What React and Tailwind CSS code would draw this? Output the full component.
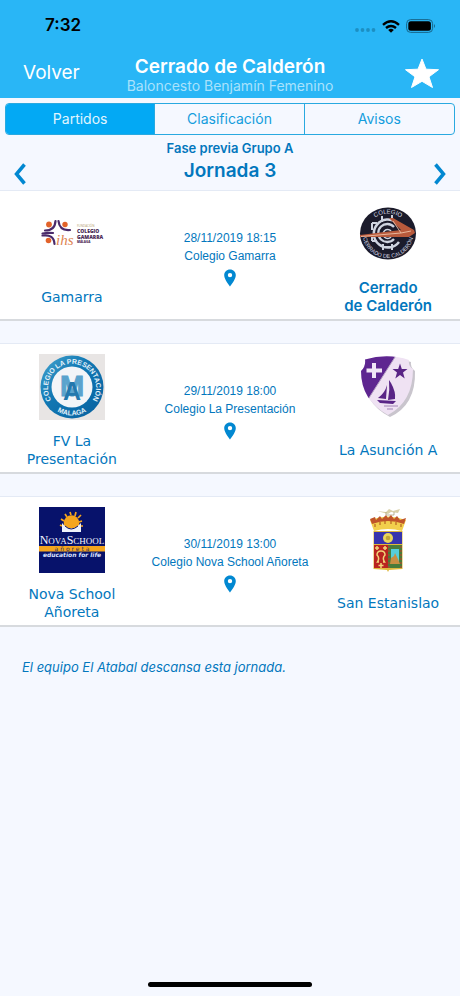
import { useState } from "react";

const TABS = ["Partidos", "Clasificación", "Avisos"];

/* ---------- team badges ---------- */
function GamarraBadge() {
  return (
    <svg viewBox="0 0 66 66" className="h-full w-full" aria-hidden="true">
      <g fill="none" stroke="#4a2a6b" strokeWidth="2.200" strokeLinecap="round">
        <path d="M6 29.500Q16 29.500 16.500 20" />
        <path d="M31 29Q20.500 30 19.500 20" />
        <path d="M3.500 32.500Q9 31.500 14 32" />
        <path d="M3.500 34.500Q15 33 15.500 43" />
      </g>
      <g fill="#e2632a">
        <circle cx="10" cy="23.500" r="2.900" />
        <circle cx="26" cy="23.500" r="2.700" />
        <circle cx="9.500" cy="39.500" r="2.800" />
      </g>
      <text x="17" y="43.500" fontSize="15" fontStyle="italic" fill="#dd8350" fontFamily="'Liberation Serif', serif">ihs</text>
      <text x="38" y="26" fontSize="3" fill="#b29a6a" fontFamily="'Open Sans', sans-serif">FUNDACIÓN</text>
      <g fill="#4a2a55" fontFamily="'Open Sans', sans-serif" fontWeight="800">
        <text x="38" y="32" fontSize="5">COLEGIO</text>
        <text x="38" y="37.500" fontSize="5">GAMARRA</text>
        <text x="38" y="42" fontSize="3">MÁLAGA</text>
      </g>
    </svg>
  );
}

function CerradoBadge() {
  return (
    <svg viewBox="0 0 66 66" className="h-full w-full" aria-hidden="true">
      <defs>
        <path id="cerrado-top" d="M12 32.500A21 20 0 0 1 54 32.500" />
        <path id="cerrado-bottom" d="M7.500 32A25.500 25 0 0 0 58.500 32" />
      </defs>
      <ellipse cx="33" cy="32.500" rx="28" ry="26" fill="#1b1b2b" />
      <g fill="none" stroke="#cfd4e0">
        <path d="M42 22A14 14 0 1 0 44 41" strokeWidth="2.500" />
        <path d="M39 26A9 9 0 1 0 39 38" strokeWidth="2.300" />
        <path d="M36 30A4.500 4.500 0 1 0 36 36" strokeWidth="1.500" />
        <path d="M27 15V21M37 14V19M17 22H22M17 40H22M28 43V49M28 46H37M37 43V49M17 22V29M17 35V40" strokeWidth="2" />
      </g>
      <path d="M5 34L46 29L34 17L38 17L59 29L60 32L54 36L5 36Z" fill="#b85a3c" />
      <path d="M6 35.500L46 32L38 20M46 32L56 30" fill="none" stroke="#edc0a5" strokeWidth="0.900" />
      <g fill="#dadde6" fontFamily="'Liberation Sans', sans-serif">
        <text fontSize="6" textAnchor="middle">
          <textPath href="#cerrado-top" startOffset="50%">COLEGIO</textPath>
        </text>
        <text fontSize="5.500" textAnchor="middle">
          <textPath href="#cerrado-bottom" startOffset="50%">CERRADO DE CALDERÓN</textPath>
        </text>
      </g>
    </svg>
  );
}

function PresentacionBadge() {
  return (
    <svg viewBox="0 0 66 66" className="h-full w-full" aria-hidden="true">
      <defs>
        <path id="presentacion-top" d="M12.300 46A24 24 0 1 1 53.700 46" />
        <path id="presentacion-bottom" d="M4.500 33A28.500 28.500 0 0 0 61.500 33" />
        <linearGradient id="presentacion-ring" x1="0" y1="0" x2="1" y2="1">
          <stop offset="0" stopColor="#49a6cf" />
          <stop offset="0.400" stopColor="#1279b4" />
          <stop offset="1" stopColor="#075f9e" />
        </linearGradient>
      </defs>
      <rect width="66" height="66" fill="#e8e5e4" />
      <circle cx="33" cy="33" r="31.500" fill="url(#presentacion-ring)" />
      <circle cx="33" cy="33" r="20.500" fill="#f3f5f8" />
      <g fontFamily="'Liberation Sans', sans-serif" fontWeight="700" textAnchor="middle">
        <text x="33" y="42" fontSize="29" fill="#5aa3cd" stroke="#5aa3cd">M</text>
        <text x="33" y="46" fontSize="25" fill="#2378ad">A</text>
      </g>
      <g fill="#e5f2fa" fontSize="7" fontFamily="'Liberation Sans', sans-serif" fontWeight="700" textAnchor="middle">
        <text>
          <textPath href="#presentacion-top" startOffset="50%">COLEGIO LA PRESENTACIÓN</textPath>
        </text>
        <text>
          <textPath href="#presentacion-bottom" startOffset="50%">MALAGA</textPath>
        </text>
      </g>
    </svg>
  );
}

function AsuncionBadge() {
  return (
    <svg viewBox="0 0 66 66" className="h-full w-full" aria-hidden="true">
      <defs>
        <clipPath id="asuncion-shield">
          <path d="M10 5.500Q33 -1 54 6Q53 12 58 15Q58 48 33 61Q6 46 6 17Q11 12 10 5.500Z" />
        </clipPath>
      </defs>
      <path d="M12 8Q35 1 56 8Q55 13 60 17Q61 51 35 63Q8 49 8 19Z" fill="#c9c5cd" />
      <g clipPath="url(#asuncion-shield)">
        <rect width="66" height="66" fill="#efe2f3" />
        <path d="M0 0H42L14 44L9 47H0Z" fill="#5e2690" />
        <path d="M42 0L12 47" stroke="#b7a4c4" strokeWidth="1" />
      </g>
      <path d="M17 9H21V14.500H27V18.500H21V24H17V18.500H11.500V14.500H17Z" fill="#f1e6f6" />
      <path d="M45 9.500L46.800 15H52.500L48 18.500L49.700 24.500L45 21L40.300 24.500L42 18.500L37.500 15H43.200Z" fill="#592486" />
      <path d="M34 26L36 29Q41 38 40 45L33 46Q35 36 34 26ZM32 31L31 45L23 44Q30 39 32 31ZM22 46L41 47L38 50L25 49Z" fill="#592486" />
      <path d="M29 52H43M32 55H38" stroke="#a084b4" strokeWidth="1" />
    </svg>
  );
}

function NovaBadge() {
  return (
    <svg viewBox="0 0 66 66" className="h-full w-full" aria-hidden="true">
      <rect width="66" height="66" fill="#07126b" />
      <path
        d="M21 18L23 19M22 12L25 14M26 7L28 10M31 5L32 8M37 5L36 9M42 8L39 11M43 14L40 15M44 19L41 19"
        stroke="#f5a51d"
        strokeWidth="1.700"
      />
      <circle cx="32.500" cy="16" r="7.800" fill="#f5a51d" />
      <path d="M23 16Q32 27 42 16V25H23Z" fill="#eff3fb" />
      <path d="M26 19Q32 25 39 19" fill="none" stroke="#07126b" strokeWidth="1" />
      <text x="33" y="36.500" fontSize="12" textAnchor="middle" fill="#f4f6ff" fontFamily="'Liberation Serif', serif">
        N<tspan fontSize="9">OVA</tspan>S<tspan fontSize="9">CHOOL</tspan>
      </text>
      <rect y="39" width="66" height="5.500" fill="#f5a51d" />
      <g fontFamily="'DejaVu Sans', sans-serif" textAnchor="middle">
        <text x="33" y="43.500" fontSize="6" fill="#33305a">a ñ o r e t a</text>
        <text x="33" y="50" fontSize="6" fontStyle="italic" fontWeight="700" fill="#dce2ff">education for life</text>
      </g>
    </svg>
  );
}

function EstanislaoBadge() {
  return (
    <svg viewBox="0 0 66 66" className="h-full w-full" aria-hidden="true">
      <path d="M22 4L31 5L34 2L38 4L45 2L43 6L36 5L33 7Z" fill="#d9d0a8" />
      <path d="M31 5V8H39V5" fill="none" stroke="#aaa27c" strokeWidth="0.800" />
      <path d="M15 13Q33 6 51 13L47 24Q33 20 19 24Z" fill="#f2cf4c" />
      <path d="M15 12L20 10L21 13L25 9L27 12L31 8L33 11L36 8L39 12L42 9L45 13L51 11L49 17Q33 11 17 17Z" fill="#c0542a" />
      <path d="M20 17V20M25 15V18M30 14V17M36 14V17M41 15V18M46 17V20" stroke="#b76322" strokeWidth="1.200" />
      <path d="M18.500 24H47.500V62L34 63L33 65L32 63L18.500 62Z" fill="#dfb93c" />
      <rect x="19" y="25" width="28" height="12" fill="#3734ae" />
      <circle cx="33" cy="31" r="5" fill="#ead65b" />
      <circle cx="33" cy="31" r="2.300" fill="#c1a639" />
      <rect x="19" y="38" width="14" height="23" fill="#b92420" />
      <rect x="33" y="38" width="14" height="23" fill="#497b3a" />
      <rect x="36" y="42" width="8" height="15" fill="#55ceda" />
      <path d="M35 57L36 51L39 49L40 46L43 52L45 57Z" fill="#c98f43" />
      <path d="M24 55H22.500Q25 51 22 48Q22 44 26 44Q30 44 30 48Q27 51 29.500 55H28M26 56V61M23.500 58.500H28.500M22 39V43M20 41H24M30 39V43M28 41H32" fill="none" stroke="#f1d478" strokeWidth="1.500" />
      <path d="M34 39V61M46 39V61" stroke="#b04a2a" strokeWidth="1.200" strokeDasharray="2 2" />
    </svg>
  );
}

/* ---------- data ---------- */
const MATCHES = [
  {
    date: "28/11/2019 18:15",
    place: "Colegio Gamarra",
    home: { name: "Gamarra", Badge: GamarraBadge },
    away: { name: "Cerrado de\u00a0Calderón", Badge: CerradoBadge, own: true },
  },
  {
    date: "29/11/2019 18:00",
    place: "Colegio La Presentación",
    home: { name: "FV La Presentación", Badge: PresentacionBadge },
    away: { name: "La Asunción A", Badge: AsuncionBadge },
  },
  {
    date: "30/11/2019 13:00",
    place: "Colegio Nova School Añoreta",
    home: { name: "Nova School Añoreta", Badge: NovaBadge },
    away: { name: "San Estanislao", Badge: EstanislaoBadge },
  },
];

/* ---------- pieces ---------- */
function StatusBar() {
  return (
    <div className="flex h-12 items-center justify-between pl-[45px] pr-6 pt-1 text-black">
      <span className="text-[17px] font-semibold">7:32</span>
      <div className="flex items-center gap-1.5">
        <svg viewBox="0 0 22 14" className="h-3.5 w-[22px]" fill="#1c8fc2" aria-hidden="true">
          <circle cx="3" cy="11" r="1.900" />
          <circle cx="8.500" cy="11" r="1.900" />
          <circle cx="14" cy="11" r="1.900" />
          <circle cx="19.500" cy="11" r="1.900" />
        </svg>
        <svg viewBox="0 0 18 13" className="h-[13px] w-[18px]" fill="none" stroke="#000" strokeWidth="2.400" aria-hidden="true">
          <path d="M1 4.800Q9 -2.200 17 4.800M4 8Q9 3.800 14 8" />
          <path d="M9 12.800L6.200 10Q9 7.700 11.800 10Z" fill="#000" stroke="none" />
        </svg>
        <svg viewBox="0 0 30 14" className="h-3.5 w-[30px]" aria-hidden="true">
          <rect x="0.600" y="0.600" width="26" height="12.800" rx="4" fill="none" stroke="#17678c" />
          <rect x="2.300" y="2.300" width="22.600" height="9.400" rx="2.500" />
          <path d="M28 5Q30 7 28 9Z" fill="#17678c" />
        </svg>
      </div>
    </div>
  );
}

function Team({ name, Badge, own }) {
  return (
    <div className="flex flex-col items-center gap-3 px-4">
      <div className="size-[66px]">
        <Badge />
      </div>
      <div className="flex h-9 items-center text-center">
        {own ? (
          <p className="font-['Inter',sans-serif] text-[15px] font-semibold leading-[18px]">{name}</p>
        ) : (
          <p className="font-['DejaVu_Sans',sans-serif] text-sm leading-[18px]">{name}</p>
        )}
      </div>
    </div>
  );
}

function MatchCard({ match }) {
  return (
    <article className="grid grid-cols-[5fr_6fr_5fr] border-t border-b-2 border-t-[#e4eaf5] border-b-[#d7dade] bg-white pt-2.5 pb-1 text-[#0277bd]">
      <Team {...match.home} />
      <div className="flex flex-col items-center justify-center whitespace-nowrap font-['Liberation_Sans',Arial,sans-serif] text-xs leading-[18px]">
        <p>{match.date}</p>
        <p>{match.place}</p>
        <button type="button" aria-label={`Ver mapa de ${match.place}`} className="mt-1">
          <svg viewBox="0 0 12 18" className="h-[18px] w-3" aria-hidden="true">
            <path
              d="M6 0.500C2.600 0.500 0.200 3 0.200 6.200C0.200 10.300 6 17.500 6 17.500S11.800 10.300 11.800 6.200C11.800 3 9.400 0.500 6 0.500ZM6 8.300A2.200 2.200 0 1 1 6 3.900A2.200 2.200 0 0 1 6 8.300Z"
              fill="#0288d1"
              fillRule="evenodd"
            />
          </svg>
        </button>
      </div>
      <Team {...match.away} />
    </article>
  );
}

export default function App() {
  const [tab, setTab] = useState("Partidos");

  return (
    <div className="flex min-h-screen flex-col bg-[#f5f8ff] font-['Inter',sans-serif]">
      <header className="bg-[#29b6f6] text-white">
        <StatusBar />
        <div className="grid h-[50px] grid-cols-[1fr_auto_1fr] items-center px-5">
          <button type="button" className="justify-self-start pl-[3px] text-[19px]">
            Volver
          </button>
          <div className="pt-1.5 text-center">
            <h1 className="text-[19px] font-semibold leading-5">Cerrado de Calderón</h1>
            <p className="text-sm leading-[18px] text-[#a9e2fc]">Baloncesto Benjamín Femenino</p>
          </div>
          <button type="button" aria-label="Favorito" className="justify-self-end">
            <svg viewBox="0 0 36 32" className="h-8 w-9" fill="#fff" aria-hidden="true">
              <path
                d="M18 2L22 12.200L34.500 12.700L25 19.800L28.500 30.500L18 24.300L7.500 30.500L11 19.800L1.500 12.700L14 12.200Z"
                stroke="#fff"
                strokeLinejoin="round"
              />
            </svg>
          </button>
        </div>
      </header>

      {/* tabs */}
      <nav className="mx-[5px] mt-[5px] grid h-8 shrink-0 grid-cols-3 divide-x divide-[#29a9e0] overflow-hidden rounded border border-[#29a9e0] text-sm">
        {TABS.map((t) => (
          <button
            key={t}
            type="button"
            aria-pressed={tab === t}
            onClick={() => setTab(t)}
            className={tab === t ? "bg-[#03a9f4] text-[#e1f5fe]" : "text-[#149ddd]"}
          >
            {t}
          </button>
        ))}
      </nav>

      {/* round selector */}
      <div className="flex items-end justify-between px-3.5 pt-1 pb-[5px] text-[#0277bd]">
        <button type="button" aria-label="Jornada anterior">
          <svg viewBox="0 0 12 22" className="h-[22px] w-3" fill="none" stroke="#0288d1" strokeWidth="3.500" aria-hidden="true">
            <path d="M10.500 1.500L2.500 11L10.500 20.500" />
          </svg>
        </button>
        <div className="text-center font-semibold">
          <p className="text-[13px] leading-[18px]">Fase previa Grupo A</p>
          <h2 className="text-[19px] leading-7">Jornada 3</h2>
        </div>
        <button type="button" aria-label="Jornada siguiente">
          <svg viewBox="0 0 12 22" className="h-[22px] w-3" fill="none" stroke="#0288d1" strokeWidth="3.500" aria-hidden="true">
            <path d="M1.500 1.500L9.500 11L1.500 20.500" />
          </svg>
        </button>
      </div>

      <main className="flex flex-1 flex-col gap-[22px]">
        {MATCHES.map((m) => (
          <MatchCard key={m.date} match={m} />
        ))}
        <p className="px-[22px] pt-2 text-[13px] italic leading-5 text-[#0277bd]">
          El equipo El Atabal descansa esta jornada.
        </p>
      </main>

      {/* home indicator */}
      <div className="mx-auto mb-[9px] h-[5px] w-[164px] rounded-full bg-black" />
    </div>
  );
}
